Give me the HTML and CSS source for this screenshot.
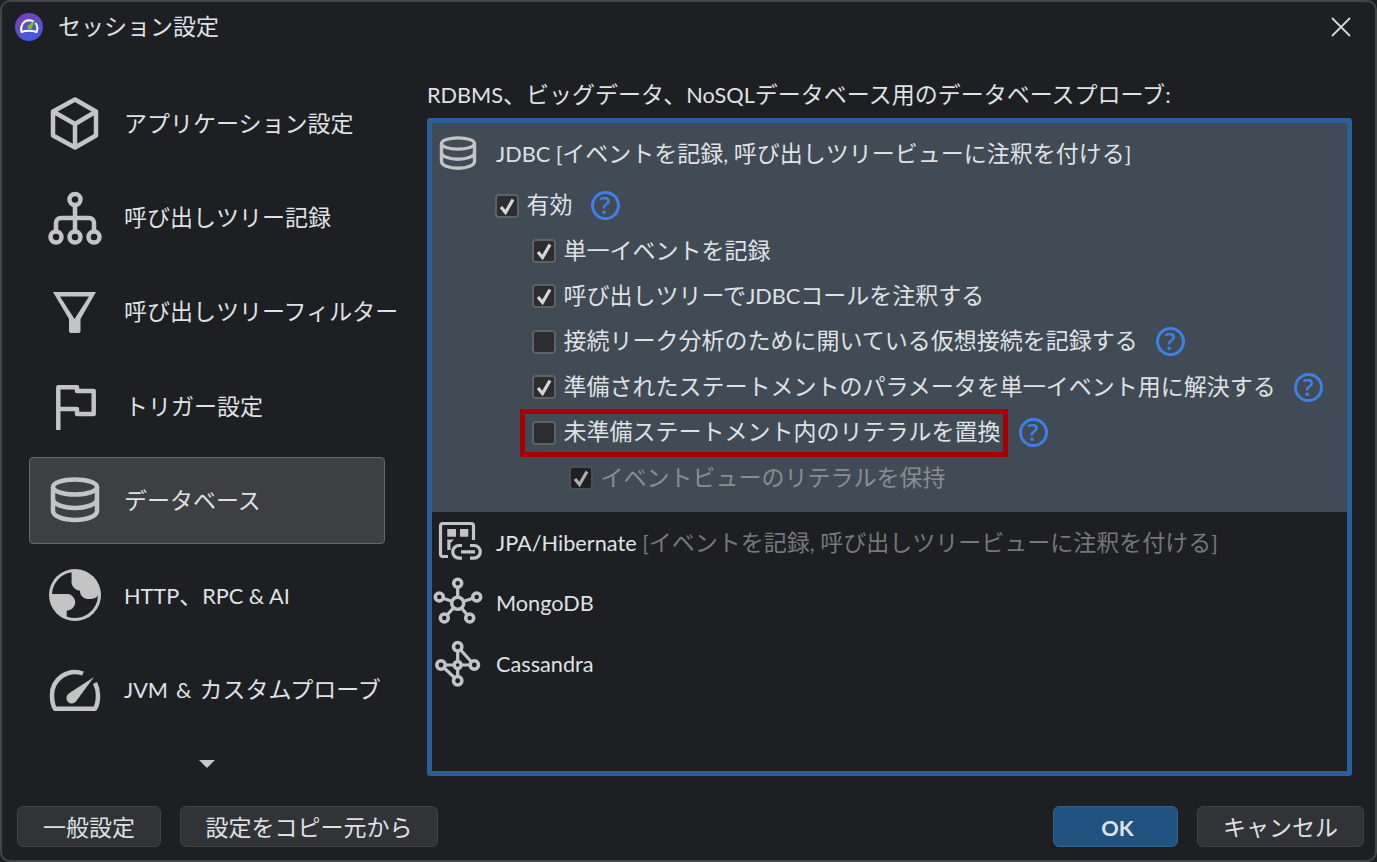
FILE: index.html
```html
<!DOCTYPE html>
<html lang="ja">
<head>
<meta charset="utf-8">
<title>セッション設定</title>
<link rel="stylesheet" href="styles.css">
</head>
<body>
<div class="dialog">
  <header class="titlebar">
    <svg class="logo" viewBox="0 0 28 28">
      <defs><linearGradient id="lg" x1="0.2" y1="0" x2="0.7" y2="1"><stop offset="0" stop-color="#7a3fb5"/><stop offset="1" stop-color="#3a5ee0"/></linearGradient></defs>
      <circle cx="14" cy="14" r="14" fill="url(#lg)"/>
      <path d="M6.500 19C5 13.500 8 7.500 14 7.200c1.500 0 2.800.4 3.800 1M20.800 10.500c1.800 2.800 2 6 .7 8.500c-5-1.600-10-1.600-15 0" fill="none" stroke="#fff" stroke-width="2" stroke-linecap="round"/>
      <path d="M20.500 6.500L16.500 15.500a2.500 2.500 0 0 1-4-2.500Z" fill="#6fc02c"/>
    </svg>
    <span class="title">セッション設定</span>
    <svg class="close" viewBox="0 0 20 20"><path d="M1 1L19 19M19 1L1 19" stroke="#d5d5d5" stroke-width="1.800" fill="none"/></svg>
  </header>
  <div class="main">
    <nav class="sidebar">
      <a class="nav-item">
        <svg class="nav-icon" viewBox="0 0 52 56"><path d="M26 4.500L47 16.500V40.500L26 52.500L4 40.500V16.500ZM4 16.500L26 29L47 16.500M26 29V52.500"/></svg>
        <span class="txt">アプリケーション設定</span>
      </a>
      <a class="nav-item">
        <svg class="nav-icon" viewBox="0 0 52 56"><circle cx="26" cy="9.500" r="5.500"/><circle cx="7" cy="47" r="5.500"/><circle cx="26" cy="47" r="5.500"/><circle cx="45" cy="47" r="5.500"/><path d="M26 15V41M7 41V33a5 5 0 0 1 5-5H40a5 5 0 0 1 5 5v8"/></svg>
        <span class="txt">呼び出しツリー記録</span>
      </a>
      <a class="nav-item">
        <svg class="nav-icon" viewBox="0 0 52 56"><path class="fill" fill-rule="evenodd" d="M4 8H47L31.500 35V47a2 2 0 0 1-2 2H22a2 2 0 0 1-2-2V35ZM11 12.500L25.500 35L40 12.500Z"/></svg>
        <span class="txt">呼び出しツリーフィルター</span>
      </a>
      <a class="nav-item">
        <svg class="nav-icon" viewBox="0 0 52 56"><path stroke-linejoin="miter" d="M9.300 52V9.300H28V13H44.700V36H28V31H9.300"/></svg>
        <span class="txt nudge">トリガー設定</span>
      </a>
      <a class="nav-item active">
        <svg class="nav-icon" viewBox="0 0 52 56"><use href="#db"/></svg>
        <span class="txt">データベース</span>
      </a>
      <a class="nav-item">
        <svg class="nav-icon" viewBox="0 0 52 56"><circle class="fill" cx="26" cy="28" r="26"/><path fill="#1e1f22" stroke="none" d="M3 27A23 23 0 0 1 22.500 5.300L22.700 12.700C21.700 17 24.300 22.700 31 23.700C31 28.700 34.300 32 40.300 32C44.300 32 48 31 49 28A23 23 0 0 1 17.700 49.400L17.700 43.700C24 43 27 38 26 33.700C25 30 22 27 19.300 27Z"/></svg>
        <span class="txt"><span class="en">HTTP</span>、<span class="en">RPC &amp; AI</span></span>
      </a>
      <a class="nav-item">
        <svg class="nav-icon" viewBox="0 0 52 56"><path d="M34 11.500A23 23 0 0 0 3 33C3 38 3.500 43 6 46.700H46C48.500 43 49 38 49 33C49 29 48 25 46 21"/><path class="fill" d="M45 15L28 38A5.500 5.500 0 1 1 20.500 31Z"/></svg>
        <span class="txt"><span class="en wide">JVM &amp; </span>カスタムプローブ</span>
      </a>
      <div class="more"><span class="more-arrow"></span></div>
    </nav>
    <section class="content">
      <div class="caption"><span class="en">RDBMS</span>、ビッグデータ、<span class="en">NoSQL</span>データベース用のデータベースプローブ<span class="en">:</span></div>
      <div class="panel">
        <div class="selected">
          <div class="tree-row head">
            <svg class="tree-icon" viewBox="0 0 52 56"><g transform="translate(6.500 8) scale(.75)"><g id="db"><ellipse cx="26" cy="14" rx="22" ry="7.500"/><path d="M4 14V38c0 5 10 9 22 9s22-4 22-9V14M4 26c0 5 10 9 22 9s22-4 22-9"/></g></g></svg>
            <span class="txt"><span class="en">JDBC [</span>イベントを記録<span class="en">, </span>呼び出しツリービューに注釈を付ける<span class="en">]</span></span>
          </div>
          <label class="opt lv1"><span class="box"><svg viewBox="0 0 24 24"><path d="M6 13L10.500 18.500L18 5.500"/></svg></span><span class="txt">有効</span><span class="help">?</span></label>
          <label class="opt lv2"><span class="box"><svg viewBox="0 0 24 24"><path d="M6 13L10.500 18.500L18 5.500"/></svg></span><span class="txt">単一イベントを記録</span></label>
          <label class="opt lv2"><span class="box"><svg viewBox="0 0 24 24"><path d="M6 13L10.500 18.500L18 5.500"/></svg></span><span class="txt">呼び出しツリーで<span class="en">JDBC</span>コールを注釈する</span></label>
          <label class="opt lv2"><span class="box"></span><span class="txt">接続リーク分析のために開いている仮想接続を記録する</span><span class="help">?</span></label>
          <label class="opt lv2"><span class="box"><svg viewBox="0 0 24 24"><path d="M6 13L10.500 18.500L18 5.500"/></svg></span><span class="txt">準備されたステートメントのパラメータを単一イベント用に解決する</span><span class="help">?</span></label>
          <label class="opt lv2"><span class="mark"><span class="box"></span><span class="txt">未準備ステートメント内のリテラルを置換</span></span><span class="help">?</span></label>
          <label class="opt lv3 disabled"><span class="box"><svg viewBox="0 0 24 24"><path d="M6 13L10.500 18.500L18 5.500"/></svg></span><span class="txt">イベントビューのリテラルを保持</span></label>
        </div>
        <div class="tree-row">
          <svg class="tree-icon thin" viewBox="0 0 52 56"><path d="M16 42.500H11a2.500 2.500 0 0 1-2.500-2.500V12a2.500 2.500 0 0 1 2.500-2.500H39a2.500 2.500 0 0 1 2.500 2.500V26"/><path class="fill" d="M15.300 15H24V22.700H15.300ZM28 15H36.300V22.700H28ZM15.300 25.500H22L18.500 29V36H15.300Z"/><path d="M30 31.500h-3a6.300 6.300 0 0 0 0 12.600h3M38 31.500h4a6.300 6.300 0 0 1 0 12.600h-4M29 37.800H43"/></svg>
          <span class="txt"><span class="en">JPA/Hibernate </span><span class="muted"><span class="en">[</span>イベントを記録<span class="en">, </span>呼び出しツリービューに注釈を付ける<span class="en">]</span></span></span>
        </div>
        <div class="tree-row">
          <svg class="tree-icon thin" viewBox="0 0 52 56"><path d="M25.700 28.300L25.700 8.300M25.700 28.300L7.300 22M25.700 28.300L44.700 22M25.700 28.300L12.300 43M25.700 28.300L37.700 43"/><g class="node"><circle cx="25.700" cy="28.300" r="6"/><circle cx="25.700" cy="8.300" r="4"/><circle cx="7.300" cy="22" r="4"/><circle cx="44.700" cy="22" r="4"/><circle cx="12.300" cy="43" r="4"/><circle cx="37.700" cy="43" r="4"/></g></svg>
          <span class="en">MongoDB</span>
        </div>
        <div class="tree-row">
          <svg class="tree-icon thin" viewBox="0 0 52 56"><path d="M25.700 10.700V44.700M9 29H42.300M25.700 10.700L42.300 29M9 29L25.700 44.700"/><g class="node"><circle cx="25.700" cy="10.700" r="4.200"/><circle cx="9" cy="29" r="4.200"/><circle cx="25.700" cy="29" r="3.500"/><circle cx="42.300" cy="29" r="4.200"/><circle cx="25.700" cy="44.700" r="4.200"/></g></svg>
          <span class="en">Cassandra</span>
        </div>
      </div>
    </section>
  </div>
  <footer class="footer">
    <button class="btn w-general">一般設定</button>
    <button class="btn w-copy">設定をコピー元から</button>
    <span class="spacer"></span>
    <button class="btn primary"><span class="en">OK</span></button>
    <button class="btn w-cancel">キャンセル</button>
  </footer>
</div>
</body>
</html>
```

FILE: styles.css
```css
* { box-sizing: border-box; }
html, body { margin: 0; height: 100%; background: #1e1f22; }
body {
  font-family: "Noto Sans CJK JP", sans-serif;
  font-size: 23px;
  color: #dfe1e5;
  overflow: hidden;
}
.en { font-family: "Lato", sans-serif; font-size: 21.700px; }
.en.wide { word-spacing: 2.500px; }
.txt { padding-bottom: 3px; }
.dialog {
  width: 1377px;
  height: 862px;
  border: 2px solid #434446;
  border-radius: 10px;
  background: #1e1f22;
  display: flex;
  flex-direction: column;
}
.titlebar {
  height: 50px;
  display: flex;
  align-items: center;
  padding: 0 24px 0 13px;
  flex: none;
}
.logo { width: 28px; height: 28px; margin-right: 15px; }
.title { flex: 1; padding-bottom: 5px; }
.close { width: 20px; height: 20px; }
.main { flex: 1; display: flex; min-height: 0; }
.sidebar {
  width: 425px;
  padding: 27.500px 42px 0 27px;
  display: flex;
  flex-direction: column;
  gap: 7px;
  flex: none;
}
.nav-item {
  height: 87.400px;
  flex: none;
  display: flex;
  align-items: center;
  gap: 23px;
  padding-left: 19px;
  border: 1px solid transparent;
  border-radius: 4px;
  white-space: nowrap;
}
.nav-item.active { background: #3d3f42; border-color: #65676a; }
.nav-icon { width: 52px; height: 56px; flex: none; overflow: visible; }
.nudge { margin-left: 1px; }
.nav-icon path, .nav-icon circle, .nav-icon ellipse,
.tree-icon path, .tree-icon circle, .tree-icon ellipse {
  fill: none;
  stroke: #c4c4c4;
  stroke-width: 4.500;
  stroke-linejoin: round;
}
.nav-icon .fill, .tree-icon .fill { fill: #c4c4c4; stroke: none; }
.nav-icon path[fill] { fill: #1e1f22; stroke: none; }
.tree-icon.thin path { stroke-width: 3.200; }
.tree-icon.thin .fill { stroke: none; }
.tree-icon.thin .node circle { stroke-width: 3.500; fill: #1e1f22; }
.more { display: flex; justify-content: center; padding-top: 20px; }
.more-arrow {
  width: 0; height: 0;
  border-left: 8px solid transparent;
  border-right: 8px solid transparent;
  border-top: 8px solid #c8c8c8;
}
.content { flex: 1; display: flex; flex-direction: column; padding: 28px 23px 0 0; min-width: 0; }
.caption { height: 38px; line-height: 26px; white-space: nowrap; }
.panel {
  height: 658px;
  border: 5px solid #2a6099;
  border-radius: 3px;
  background: #1e1f22;
}
.selected { background: #414b55; padding-bottom: 11px; }
.tree-row {
  height: 61px;
  display: flex;
  align-items: center;
  gap: 12px;
  white-space: nowrap;
}
.tree-row.head { height: 60px; }
.tree-icon { width: 52px; height: 56px; flex: none; overflow: visible; }
.muted { color: #74777b; }
.opt {
  height: 45.400px;
  display: flex;
  align-items: center;
  gap: 8px;
  white-space: nowrap;
}
.opt .txt { padding-bottom: 5px; }
.lv1 { padding-left: 62.500px; }
.lv2 { padding-left: 99.500px; }
.lv3 { padding-left: 136.500px; }
.box {
  width: 24px; height: 24px;
  flex: none;
  display: block;
  background: #2b2d30;
  border: 2px solid #5e6165;
  border-radius: 4px;
  position: relative;
}
.box svg { position: absolute; left: -2px; top: -2px; width: 24px; height: 24px; }
.box path { fill: none; stroke: #d6d6d6; stroke-width: 3.200; }
.help {
  width: 29px; height: 29px;
  flex: none;
  margin-left: 10px;
  border: 3px solid #3d80e6;
  border-radius: 50%;
  color: #3d80e6;
  font-family: "Open Sans", sans-serif;
  font-weight: 600;
  font-size: 24px;
  line-height: 22px;
  text-align: center;
}
.mark {
  display: flex;
  align-items: center;
  gap: 8px;
  height: 48px;
  flex: none;
  margin: 0 -7px 0 -12px;
  padding: 0 2px 0 7px;
  border: 5px solid #a80000;
}
.disabled { color: #8a8d91; }
.disabled .box { background: #1f2023; border-color: #4b4e52; }
.disabled .box path { stroke: #aeaeae; }
.footer {
  height: 55px;
  flex: none;
  display: flex;
  gap: 19px;
  padding: 1px 11px 0 15px;
}
.spacer { flex: 1; }
.btn {
  height: 41px;
  background: #313337;
  border: 1.500px solid #3f4144;
  border-radius: 6px;
  color: #dfe1e5;
  font: inherit;
  padding: 0 0 2px;
}
.w-general { width: 144px; }
.w-copy { width: 258px; }
.w-cancel { width: 167px; }
.primary { width: 125px; background: #225380; border-color: #35628e; font-weight: 700; padding-left: 4px; }
```
